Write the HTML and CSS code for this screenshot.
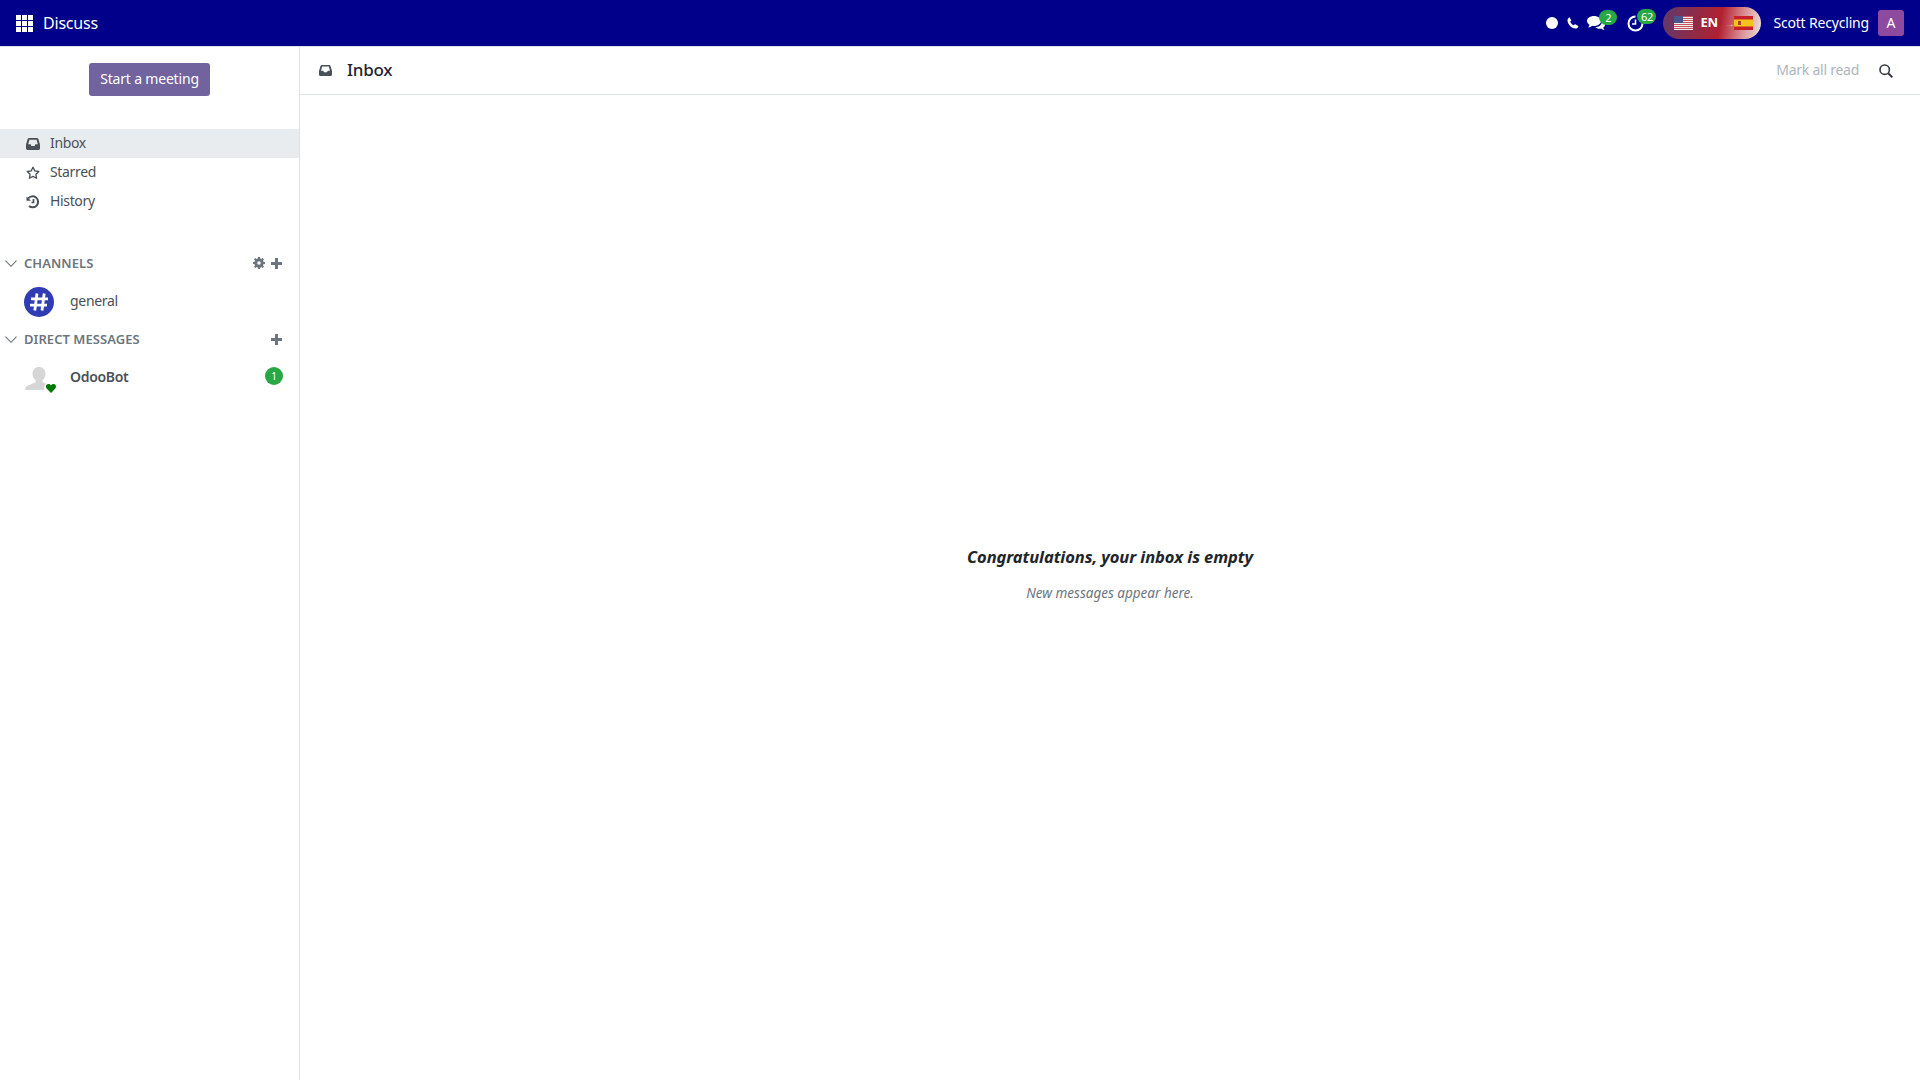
FILE: index.html
```html
<!DOCTYPE html>
<html lang="en">
<head>
<meta charset="utf-8">
<title>Discuss</title>
<link rel="stylesheet" href="styles.css">
</head>
<body>
<header class="navbar">
  <div class="nav-left">
    <svg class="apps" viewBox="0 0 17 17" width="17" height="17"><g fill="#fff"><rect width="5" height="5"/><rect x="6" width="5" height="5"/><rect x="12" width="5" height="5"/><rect y="6" width="5" height="5"/><rect x="6" y="6" width="5" height="5"/><rect x="12" y="6" width="5" height="5"/><rect y="12" width="5" height="5"/><rect x="6" y="12" width="5" height="5"/><rect x="12" y="12" width="5" height="5"/></g></svg>
    <span class="brand">Discuss</span>
  </div>
  <div class="nav-right">
    <span class="dot"></span>
    <svg class="phone" viewBox="0 0 12 12" width="12" height="12"><path fill="#fff" d="M2.6.4 4.2 3c.2.3.1.6-.1.8l-.9.9c.6 1.600 1.800 2.800 3.500 3.600l.9-.9c.2-.2.5-.3.800-.1l2.800 1.600c.3.200.3.500.1.800-.6 1.100-1.600 1.900-2.900 1.800C4.300 11.200 1 7.500.5 3.700.4 2.400 1 1.300 2 .5c.2-.2.4-.3.600-.1z"/></svg>
    <span class="systray-item chat">
      <svg viewBox="0 0 18 15" width="18" height="15"><path fill="#fff" d="M7 0c3.900 0 7 2.200 7 5s-3.100 5-7 5c-.7 0-1.300-.1-1.900-.2C3.900 10.800 2.500 11.300 1 11.400c.8-.8 1.300-1.600 1.500-2.600C1 7.900 0 6.500 0 5c0-2.800 3.100-5 7-5z"/><path fill="#fff" d="M15 5.200c1.800.7 3 2 3 3.500 0 1.200-.7 2.200-1.800 2.900.2.900.7 1.700 1.400 2.400-1.300-.1-2.500-.6-3.500-1.500-.5.100-1 .2-1.600.2-1.700 0-3.200-.6-4.100-1.500 3.700-.1 6.700-2.600 6.600-6z"/></svg>
      <span class="badge badge-chat">2</span>
    </span>
    <span class="systray-item clock">
      <svg viewBox="0 0 17 17" width="17" height="17"><path fill="none" stroke="#fff" stroke-width="2" d="M15.500 8.500a7 7 0 1 1-7-7"/><path fill="none" stroke="#fff" stroke-width="1.600" d="M8.500 4.500v4.500H5"/></svg>
      <span class="badge badge-clock">62</span>
    </span>
    <div class="lang-pill">
      <svg class="flag" viewBox="0 0 19 14" width="19" height="14"><rect width="19" height="14" fill="#eee"/><g fill="#c9505c"><rect width="19" height="1"/><rect y="2" width="19" height="1"/><rect y="4" width="19" height="1"/><rect y="6" width="19" height="1"/><rect y="8" width="19" height="1"/><rect y="10" width="19" height="1"/><rect y="12" width="19" height="1"/></g><rect width="9" height="7" fill="#4a5590"/></svg>
      <span class="lang-code">EN</span>
      <span class="lang-arrow">→</span>
      <svg class="flag" viewBox="0 0 19 14" width="19" height="14"><rect width="19" height="14" fill="#c8202a"/><rect y="3.500" width="19" height="7" fill="#f6c21c"/><rect x="4" y="5" width="3" height="4" fill="#b0402a"/></svg>
    </div>
    <span class="user-name">Scott Recycling</span>
    <span class="user-avatar">A</span>
  </div>
</header>
<div class="content">
  <aside class="sidebar">
    <div class="meeting-wrap"><button class="meeting-btn">Start a meeting</button></div>
    <nav class="mailboxes">
      <div class="mailbox active">
        <svg class="mb-icon" viewBox="0 0 13 11" width="14" height="12"><path fill="#495057" d="M3 0h7c.7 0 1.200.4 1.500 1L13 6v3.500c0 .9-.6 1.500-1.500 1.500h-10C.6 11 0 10.400 0 9.500V6l1.500-5C1.800.4 2.300 0 3 0z"/><path fill="#e9ecef" d="M3.200 1.500h6.600l1.200 4.300H8.700L8 7.300H5l-.7-1.500H2z"/></svg>
        <span>Inbox</span>
      </div>
      <div class="mailbox">
        <svg class="mb-icon" viewBox="0 0 14 14" width="14" height="14"><path fill="none" stroke="#495057" stroke-width="1.300" stroke-linejoin="round" d="M7 1.200l1.800 3.700 4 .6-2.900 2.800.7 4L7 10.400l-3.600 1.900.7-4L1.200 5.500l4-.6z"/></svg>
        <span>Starred</span>
      </div>
      <div class="mailbox">
        <svg class="mb-icon" viewBox="0 0 14 14" width="14" height="14"><path fill="none" stroke="#495057" stroke-width="2" d="M2.200 3.500A5.500 5.500 0 1 1 3 11"/><path fill="#495057" d="M.5 1.500l4.500 4.200H.5z"/><path fill="none" stroke="#495057" stroke-width="1.700" d="M7.500 4v3.500H5.500"/></svg>
        <span>History</span>
      </div>
    </nav>
    <section class="category cat-channels">
      <div class="cat-head">
        <svg class="chev" viewBox="0 0 12 7" width="12" height="7"><path fill="none" stroke="#6c757d" stroke-width="1.100" d="M.5.700 6 6.300 11.500.700"/></svg>
        <span class="cat-title">CHANNELS</span>
        <svg class="cat-gear" viewBox="0 0 12 12" width="12" height="12"><path fill="#6c757d" fill-rule="evenodd" d="M5 0h2l.3 1.600 1 .4L9.700 1 11 2.300 10 3.700l.4 1L12 5v2l-1.600.3-.4 1 1 1.400L9.700 11l-1.400-1-1 .4L7 12H5l-.3-1.600-1-.4L2.300 11 1 9.700 2 8.300l-.4-1L0 7V5l1.600-.3.4-1L1 2.300 2.300 1l1.400 1 1-.4zM6 4.200a1.800 1.800 0 1 0 0 3.600 1.800 1.800 0 0 0 0-3.600z"/></svg>
        <svg class="cat-plus" viewBox="0 0 11 11" width="11" height="11"><path fill="#6c757d" d="M4 0h3v4h4v3H7v4H4V7H0V4h4z"/></svg>
      </div>
      <div class="thread">
        <span class="channel-avatar">
          <svg viewBox="0 0 30 30" width="30" height="30"><circle cx="15" cy="15" r="15" fill="#2f3cb4"/><path fill="none" stroke="#fff" stroke-width="2.800" d="M13 6.500 10.800 23.500M20.200 6.500 18 23.500M7 11.800h17M6 18.200h17"/></svg>
        </span>
        <span class="thread-name">general</span>
      </div>
    </section>
    <section class="category cat-dm">
      <div class="cat-head">
        <svg class="chev" viewBox="0 0 12 7" width="12" height="7"><path fill="none" stroke="#6c757d" stroke-width="1.100" d="M.5.700 6 6.300 11.500.700"/></svg>
        <span class="cat-title">DIRECT MESSAGES</span>
        <svg class="cat-plus" viewBox="0 0 11 11" width="11" height="11"><path fill="#6c757d" d="M4 0h3v4h4v3H7v4H4V7H0V4h4z"/></svg>
      </div>
      <div class="thread dm">
        <span class="bot-avatar">
          <svg viewBox="0 0 30 30" width="30" height="30"><path fill="#d6d6d6" d="M14 5c3.700 0 6.500 2.600 6.500 6.500 0 3-1.200 5.300-3 6.500v2.300l7.500 3.200c1.800.8 3 2.600 3 4.500H0c0-1.900 1.200-3.700 3-4.500l7.500-3.200V18c-1.800-1.200-3-3.500-3-6.500C7.500 7.600 10.300 5 14 5z"/></svg>
          <svg class="heart" viewBox="0 0 14 13" width="14" height="13"><rect width="14" height="13" rx="6" fill="#fff"/><path fill="#007a00" d="M7 11 2.600 6.500C1.400 5 2 2.300 4.300 2.100 5.500 2 6.500 2.600 7 3.500 7.500 2.600 8.500 2 9.700 2.100 12 2.300 12.600 5 11.400 6.500z"/></svg>
        </span>
        <span class="thread-name strong">OdooBot</span>
        <span class="badge counter">1</span>
      </div>
    </section>
  </aside>
  <main class="main">
    <div class="topbar">
      <svg class="title-icon" viewBox="0 0 13 11" width="13" height="11"><path fill="#495057" d="M3 0h7c.7 0 1.200.4 1.500 1L13 6v3.500c0 .9-.6 1.500-1.500 1.500h-10C.6 11 0 10.400 0 9.500V6l1.500-5C1.800.4 2.300 0 3 0z"/><path fill="#fff" d="M3.200 1.500h6.600l1.200 4.300H8.700L8 7.300H5l-.7-1.500H2z"/></svg>
      <span class="title">Inbox</span>
      <span class="mark-read">Mark all read</span>
      <svg class="search" viewBox="0 0 14 14" width="14" height="14"><circle cx="5.700" cy="5.700" r="4.700" fill="none" stroke="#343a40" stroke-width="1.600"/><path stroke="#343a40" stroke-width="2" d="M9.200 9.200 13.300 13.300"/></svg>
    </div>
    <div class="empty">
      <h2 class="empty-title">Congratulations, your inbox is empty</h2>
      <p class="empty-sub">New messages appear here.</p>
    </div>
  </main>
</div>
</body>
</html>
```
FILE: styles.css
```css
* { box-sizing: border-box; }
html, body { margin: 0; height: 100%; }
body {
  font-family: "Noto Sans", "Open Sans", sans-serif;
  font-size: 14px;
  color: #495057;
  background: #fff;
  display: flex;
  flex-direction: column;
  height: 1080px;
  overflow: hidden;
}
svg { display: block; flex: none; }

.navbar {
  height: 47px;
  flex: none;
  background: #00008b;
  border-bottom: 1px solid #dee2e6;
  color: #fff;
  display: flex;
  align-items: center;
  justify-content: space-between;
  padding: 0 16px;
}
.nav-left { display: flex; align-items: center; }
.brand { margin-left: 10px; font-size: 16px; letter-spacing: -0.2px; }
.nav-right { display: flex; align-items: center; }
.dot { width: 12px; height: 12px; border-radius: 50%; background: #fff; }
.phone { margin-left: 9px; }
.systray-item { position: relative; display: block; }
.chat { margin-left: 8px; width: 18px; }
.clock { margin-left: 22px; width: 17px; }
.badge {
  background: #28a745;
  color: #fff;
  border-radius: 10px;
  font-size: 11px;
  line-height: 15px;
  height: 15px;
  text-align: center;
}
.badge-chat { position: absolute; left: 12px; top: -6px; width: 18px; }
.badge-clock { position: absolute; left: 10px; top: -6px; width: 19px; letter-spacing: -0.3px; }
.lang-pill {
  margin-left: 19px;
  width: 98px;
  height: 32px;
  border-radius: 16px;
  background: linear-gradient(100deg, #5f3a6d 0%, #8a2c4a 30%, #b32030 58%, #d98f96 80%, #f0e0e0 100%);
  display: flex;
  align-items: center;
  padding: 0 10px 0 11px;
}
.lang-code { margin-left: 7px; font-size: 13px; font-weight: 700; letter-spacing: -0.2px; margin-bottom: 2px; }
.lang-arrow { margin-left: 7px; font-size: 10px; width: 9px; color: #e8b8bc; }
.user-name { margin-left: 12px; letter-spacing: -0.18px; margin-bottom: 2px; }
.user-avatar {
  margin-left: 9px;
  width: 26px;
  height: 26px;
  border-radius: 3px;
  background: #8e4a9e;
  text-align: center;
  line-height: 26px;
  font-size: 14px;
}

.content { flex: 1; display: flex; min-height: 0; }
.sidebar { width: 300px; flex: none; border-right: 1px solid #dee2e6; }
.meeting-wrap { display: flex; justify-content: center; padding-top: 16px; }
.meeting-btn {
  width: 121px;
  height: 33px;
  padding: 0 0 2px;
  border: 0;
  border-radius: 3px;
  background: #71639e;
  color: #fff;
  font: inherit;
  letter-spacing: -0.18px;
}
.mailboxes { margin-top: 33px; }
.mailbox {
  height: 29px;
  display: flex;
  align-items: center;
  letter-spacing: -0.35px;
}
.mailbox.active { background: #e9ecef; }
.mb-icon { margin-left: 26px; }
.mailbox span { margin-left: 10px; margin-bottom: 2px; }

.category { padding-right: 17px; }
.cat-channels { margin-top: 36px; }
.cat-dm { margin-top: 6px; }
.cat-head { height: 22px; display: flex; align-items: center; padding-left: 5px; }
.cat-title {
  margin-left: 7px;
  margin-right: auto;
  font-size: 13px;
  font-weight: 600;
  color: #6c757d;
  letter-spacing: 0.05px;
}
.cat-gear { margin-right: 6px; }
.thread { display: flex; align-items: center; height: 40px; padding-left: 24px; margin-top: 8px; }
.channel-avatar { display: block; }
.thread-name { margin-left: 16px; color: #495057; letter-spacing: -0.3px; margin-bottom: 3px; }
.thread-name.strong { font-weight: 600; margin-bottom: 1px; }
.dm { padding-left: 25px; margin-top: 7px; height: 40px; }
.dm .thread-name { margin-left: 15px; }
.bot-avatar { position: relative; display: block; width: 30px; height: 30px; }
.heart { position: absolute; right: -3px; bottom: -3px; }
.counter {
  margin-left: auto;
  margin-bottom: 3px;
  margin-right: -1px;
  width: 18px;
  height: 18px;
  line-height: 18px;
  border-radius: 50%;
  font-size: 10px;
}

.main { flex: 1; display: flex; flex-direction: column; min-width: 0; }
.topbar {
  height: 48px;
  flex: none;
  border-bottom: 1px solid #dee2e6;
  display: flex;
  align-items: center;
  padding: 0 27px 0 19px;
}
.title { margin-left: 15px; margin-right: auto; margin-bottom: 2px; font-size: 17px; font-weight: 500; color: #212529; letter-spacing: -0.25px; }
.mark-read { color: #adb5bd; letter-spacing: -0.25px; margin-bottom: 2px; }
.search { margin-left: 20px; }
.empty { flex: 1; display: flex; flex-direction: column; align-items: center; padding-top: 450px; }
.empty-title { margin: 0; font-size: 16.500px; line-height: 24px; font-style: italic; font-weight: 700; color: #212529; letter-spacing: -0.08px; }
.empty-sub { margin: 14px 0 0; font-size: 13.500px; line-height: 20px; font-style: italic; color: #6c757d; letter-spacing: 0; }
```
